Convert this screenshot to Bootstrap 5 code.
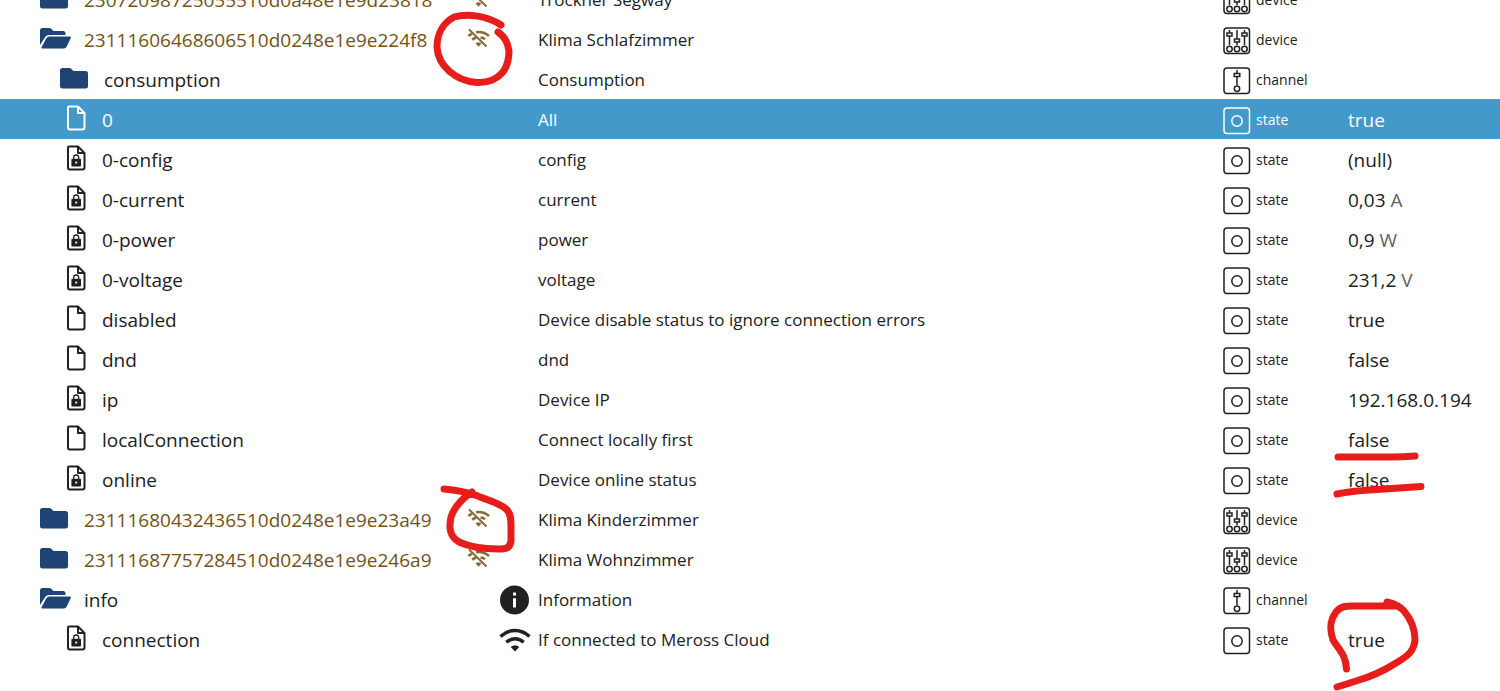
<!DOCTYPE html>
<html lang="en">
<head>
<meta charset="utf-8">
<meta name="viewport" content="width=device-width, initial-scale=1">
<title>Objects</title>
<link href="https://cdn.jsdelivr.net/npm/bootstrap@5.3.0/dist/css/bootstrap.min.css" rel="stylesheet">
<style>
  body { font-family: "Open Sans", "Noto Sans", sans-serif; color: #212121; background: #fff; }
  .viewport { overflow: hidden; min-height: 100vh; }
  /* the list is scrolled by half a row */
  .objects { table-layout: fixed; margin-top: -21px; }
  .objects td { padding: 0; }
  .line { height: 40px; white-space: nowrap; }
  .col-name { width: 498px; }
  .col-type { width: 125px; }
  .col-value { width: 152px; }
  .name, .value { font-size: 19px; padding-top: 2px; }
  .desc { font-size: 17px; padding-top: 2px; }
  .kind { font-size: 14px; }
  .level-1 { padding-left: 40px; }
  .level-2 { padding-left: 60px; }
  .slot-folder { width: 44px; padding-bottom: 4px; }
  .slot-file { width: 42px; padding-left: 6px; padding-bottom: 4px; }
  .slot-desc { width: 40px; padding-left: 1px; }
  .slot-kind { width: 33px; padding-top: 4px; }
  .folder { color: #1f4375; }
  .offline { color: #735216; }
  .unit { color: #616161; }
  .picked { background: #4399ca; color: #fff; }
  svg { display: block; flex: none; }
  .signal { margin: 0 7px 4px auto; opacity: .85; }
  .pen { fill: none; stroke: #e71d1c; stroke-width: 7; stroke-linecap: round; stroke-linejoin: round; pointer-events: none; }
</style>
</head>
<body>
<svg width="0" height="0" class="position-absolute" aria-hidden="true">
  <symbol id="i-folder" viewBox="0 0 32 22"><path fill="currentColor" d="M2.500 1H9.500Q10.500 1 11.200 1.700L13.500 4H25.500Q28 4 28 6.500V19Q28 21.500 25.500 21.500H2.500Q0 21.500 0 19V3.500Q0 1 2.500 1Z"/></symbol>
  <symbol id="i-open" viewBox="0 0 32 22"><path fill="currentColor" d="M2.500 1H9.500Q10.500 1 11.200 1.700L13.500 4H23Q25.500 4 25.500 6.500V8H9Q6.500 8 5 10.200L0 18V3.500Q0 1 2.500 1ZM9.300 9.500H29.800Q31.500 9.500 30.800 11L26.600 19.800Q25.800 21.500 24 21.500H2.500Q.8 21.500 1.600 20L6.500 11Q7.500 9.500 9.300 9.500Z"/></symbol>
  <symbol id="i-file" viewBox="0 0 20 26"><path fill="none" stroke="currentColor" stroke-width="2" stroke-linejoin="round" d="M3 1.500H12L18.500 8V22.500Q18.500 24.500 16.500 24.500H4Q2 24.500 2 22.500V2.500Q2 1.500 3 1.500ZM12 2V8H18.500"/></symbol>
  <symbol id="i-lock" viewBox="0 0 20 26"><path fill="none" stroke="currentColor" stroke-width="2" stroke-linejoin="round" d="M3 1.500H12L18.500 8V22.500Q18.500 24.500 16.500 24.500H4Q2 24.500 2 22.500V2.500Q2 1.500 3 1.500ZM12 2V8H18.500"/><path fill="none" stroke="currentColor" stroke-width="1.300" d="M7.700 14V12.500Q7.700 10 10.200 10T12.700 12.500V14"/><path fill="currentColor" fill-rule="evenodd" d="M6.200 13.700H14.200Q15 13.700 15 14.500V20.500Q15 21.500 14 21.500H6.400Q5.400 21.500 5.400 20.500V14.500Q5.400 13.700 6.200 13.700ZM10.200 16.500A1.100 1.100 0 1 0 10.200 18.700A1.100 1.100 0 1 0 10.200 16.500Z"/></symbol>
  <symbol id="i-off" viewBox="0 0 24 20"><g fill="none" stroke="currentColor"><path stroke-width="2" d="M2 1.500L19.500 18.500"/><path stroke-width="2.600" d="M1.500 8Q3 6.600 5 5.600M9 4.200Q16.500 3 22 8M5.200 11.700Q7 10 9.300 9.400M13.500 9.400L14 9.500Q16.500 10 18 11.300"/></g><path fill="currentColor" d="M8.500 15.500Q11.500 12.800 14.500 15.500L11.500 18.700Z"/></symbol>
  <symbol id="i-wifi" viewBox="0 0 32 24"><g fill="none" stroke="currentColor" stroke-width="3.500"><path d="M1.500 8.500Q8 2.500 16 2.500T30.500 8.500M7.300 14.300Q11.300 10.800 16 10.800T24.700 14.300"/></g><path fill="currentColor" d="M11.700 19Q16 15.400 20.300 19L16 23.500Z"/></symbol>
  <symbol id="i-info" viewBox="0 0 30 30"><path fill="currentColor" fill-rule="evenodd" d="M15.500 .5A14.500 14.500 0 1 1 15.500 29.500A14.500 14.500 0 1 1 15.500 .5ZM14 7.500V10.500H17V7.500ZM14 13.200V22.500H17V13.200Z"/></symbol>
  <symbol id="i-state" viewBox="0 0 28 28"><g fill="none" stroke="currentColor" stroke-width="1.500"><rect x="1" y="1" width="25.500" height="25.500" rx="3"/><circle cx="14" cy="14" r="5.200"/></g></symbol>
  <symbol id="i-channel" viewBox="0 0 28 28"><g fill="none" stroke="currentColor" stroke-width="1.500"><rect x="1" y="1" width="25.500" height="25.500" rx="3"/><path d="M14 3V6.500M11.200 6.500H16.800V9.500H11.200ZM14 9.500V18"/><circle cx="14" cy="21.800" r="2.700"/></g></symbol>
  <symbol id="i-device" viewBox="0 0 28 28"><g fill="none" stroke="currentColor" stroke-width="1.500"><rect x="1" y="1" width="25.500" height="25.500" rx="3"/><path d="M6.500 3V6M4 6H9V9H4ZM6.500 9V18M14 3V12M11.500 12H16.500V15H11.500ZM14 15V18M21.500 3V6M19 6H24V9H19ZM21.500 9V18"/><circle cx="6.500" cy="22" r="2.700"/><circle cx="14" cy="22" r="2.700"/><circle cx="21.500" cy="22" r="2.700"/></g></symbol>
</svg>

<main class="viewport position-relative">
<table class="objects w-100">
<colgroup><col class="col-name"><col><col class="col-type"><col class="col-value"></colgroup>
<tbody>
<tr>
  <td><div class="line name level-1 d-flex align-items-center offline"><span class="slot-folder folder"><svg width="32" height="22"><use href="#i-folder"/></svg></span>23072098725055510d0a48e1e9d23818<svg class="signal" width="24" height="20"><use href="#i-off"/></svg></div></td>
  <td><div class="line desc d-flex align-items-center"><span class="slot-desc"></span>Trockner Segway</div></td>
  <td><div class="line kind d-flex align-items-center"><span class="slot-kind"><svg width="28" height="28"><use href="#i-device"/></svg></span>device</div></td>
  <td></td>
</tr>
<tr>
  <td><div class="line name level-1 d-flex align-items-center offline"><span class="slot-folder folder"><svg width="32" height="22"><use href="#i-open"/></svg></span>23111606468606510d0248e1e9e224f8<svg class="signal" width="24" height="20"><use href="#i-off"/></svg></div></td>
  <td><div class="line desc d-flex align-items-center"><span class="slot-desc"></span>Klima Schlafzimmer</div></td>
  <td><div class="line kind d-flex align-items-center"><span class="slot-kind"><svg width="28" height="28"><use href="#i-device"/></svg></span>device</div></td>
  <td></td>
</tr>
<tr>
  <td><div class="line name level-2 d-flex align-items-center"><span class="slot-folder folder"><svg width="32" height="22"><use href="#i-folder"/></svg></span>consumption</div></td>
  <td><div class="line desc d-flex align-items-center"><span class="slot-desc"></span>Consumption</div></td>
  <td><div class="line kind d-flex align-items-center"><span class="slot-kind"><svg width="28" height="28"><use href="#i-channel"/></svg></span>channel</div></td>
  <td></td>
</tr>
<tr class="picked">
  <td><div class="line name level-2 d-flex align-items-center"><span class="slot-file"><svg width="20" height="26"><use href="#i-file"/></svg></span>0</div></td>
  <td><div class="line desc d-flex align-items-center"><span class="slot-desc"></span>All</div></td>
  <td><div class="line kind d-flex align-items-center"><span class="slot-kind"><svg width="28" height="28"><use href="#i-state"/></svg></span>state</div></td>
  <td><div class="line value d-flex align-items-center">true</div></td>
</tr>
<tr>
  <td><div class="line name level-2 d-flex align-items-center"><span class="slot-file"><svg width="20" height="26"><use href="#i-lock"/></svg></span>0-config</div></td>
  <td><div class="line desc d-flex align-items-center"><span class="slot-desc"></span>config</div></td>
  <td><div class="line kind d-flex align-items-center"><span class="slot-kind"><svg width="28" height="28"><use href="#i-state"/></svg></span>state</div></td>
  <td><div class="line value d-flex align-items-center">(null)</div></td>
</tr>
<tr>
  <td><div class="line name level-2 d-flex align-items-center"><span class="slot-file"><svg width="20" height="26"><use href="#i-lock"/></svg></span>0-current</div></td>
  <td><div class="line desc d-flex align-items-center"><span class="slot-desc"></span>current</div></td>
  <td><div class="line kind d-flex align-items-center"><span class="slot-kind"><svg width="28" height="28"><use href="#i-state"/></svg></span>state</div></td>
  <td><div class="line value d-flex align-items-center">0,03&nbsp;<span class="unit">A</span></div></td>
</tr>
<tr>
  <td><div class="line name level-2 d-flex align-items-center"><span class="slot-file"><svg width="20" height="26"><use href="#i-lock"/></svg></span>0-power</div></td>
  <td><div class="line desc d-flex align-items-center"><span class="slot-desc"></span>power</div></td>
  <td><div class="line kind d-flex align-items-center"><span class="slot-kind"><svg width="28" height="28"><use href="#i-state"/></svg></span>state</div></td>
  <td><div class="line value d-flex align-items-center">0,9&nbsp;<span class="unit">W</span></div></td>
</tr>
<tr>
  <td><div class="line name level-2 d-flex align-items-center"><span class="slot-file"><svg width="20" height="26"><use href="#i-lock"/></svg></span>0-voltage</div></td>
  <td><div class="line desc d-flex align-items-center"><span class="slot-desc"></span>voltage</div></td>
  <td><div class="line kind d-flex align-items-center"><span class="slot-kind"><svg width="28" height="28"><use href="#i-state"/></svg></span>state</div></td>
  <td><div class="line value d-flex align-items-center">231,2&nbsp;<span class="unit">V</span></div></td>
</tr>
<tr>
  <td><div class="line name level-2 d-flex align-items-center"><span class="slot-file"><svg width="20" height="26"><use href="#i-file"/></svg></span>disabled</div></td>
  <td><div class="line desc d-flex align-items-center"><span class="slot-desc"></span>Device disable status to ignore connection errors</div></td>
  <td><div class="line kind d-flex align-items-center"><span class="slot-kind"><svg width="28" height="28"><use href="#i-state"/></svg></span>state</div></td>
  <td><div class="line value d-flex align-items-center">true</div></td>
</tr>
<tr>
  <td><div class="line name level-2 d-flex align-items-center"><span class="slot-file"><svg width="20" height="26"><use href="#i-file"/></svg></span>dnd</div></td>
  <td><div class="line desc d-flex align-items-center"><span class="slot-desc"></span>dnd</div></td>
  <td><div class="line kind d-flex align-items-center"><span class="slot-kind"><svg width="28" height="28"><use href="#i-state"/></svg></span>state</div></td>
  <td><div class="line value d-flex align-items-center">false</div></td>
</tr>
<tr>
  <td><div class="line name level-2 d-flex align-items-center"><span class="slot-file"><svg width="20" height="26"><use href="#i-lock"/></svg></span>ip</div></td>
  <td><div class="line desc d-flex align-items-center"><span class="slot-desc"></span>Device IP</div></td>
  <td><div class="line kind d-flex align-items-center"><span class="slot-kind"><svg width="28" height="28"><use href="#i-state"/></svg></span>state</div></td>
  <td><div class="line value d-flex align-items-center">192.168.0.194</div></td>
</tr>
<tr>
  <td><div class="line name level-2 d-flex align-items-center"><span class="slot-file"><svg width="20" height="26"><use href="#i-file"/></svg></span>localConnection</div></td>
  <td><div class="line desc d-flex align-items-center"><span class="slot-desc"></span>Connect locally first</div></td>
  <td><div class="line kind d-flex align-items-center"><span class="slot-kind"><svg width="28" height="28"><use href="#i-state"/></svg></span>state</div></td>
  <td><div class="line value d-flex align-items-center">false</div></td>
</tr>
<tr>
  <td><div class="line name level-2 d-flex align-items-center"><span class="slot-file"><svg width="20" height="26"><use href="#i-lock"/></svg></span>online</div></td>
  <td><div class="line desc d-flex align-items-center"><span class="slot-desc"></span>Device online status</div></td>
  <td><div class="line kind d-flex align-items-center"><span class="slot-kind"><svg width="28" height="28"><use href="#i-state"/></svg></span>state</div></td>
  <td><div class="line value d-flex align-items-center">false</div></td>
</tr>
<tr>
  <td><div class="line name level-1 d-flex align-items-center offline"><span class="slot-folder folder"><svg width="32" height="22"><use href="#i-folder"/></svg></span>23111680432436510d0248e1e9e23a49<svg class="signal" width="24" height="20"><use href="#i-off"/></svg></div></td>
  <td><div class="line desc d-flex align-items-center"><span class="slot-desc"></span>Klima Kinderzimmer</div></td>
  <td><div class="line kind d-flex align-items-center"><span class="slot-kind"><svg width="28" height="28"><use href="#i-device"/></svg></span>device</div></td>
  <td></td>
</tr>
<tr>
  <td><div class="line name level-1 d-flex align-items-center offline"><span class="slot-folder folder"><svg width="32" height="22"><use href="#i-folder"/></svg></span>23111687757284510d0248e1e9e246a9<svg class="signal" width="24" height="20"><use href="#i-off"/></svg></div></td>
  <td><div class="line desc d-flex align-items-center"><span class="slot-desc"></span>Klima Wohnzimmer</div></td>
  <td><div class="line kind d-flex align-items-center"><span class="slot-kind"><svg width="28" height="28"><use href="#i-device"/></svg></span>device</div></td>
  <td></td>
</tr>
<tr>
  <td><div class="line name level-1 d-flex align-items-center"><span class="slot-folder folder"><svg width="32" height="22"><use href="#i-open"/></svg></span>info</div></td>
  <td><div class="line desc d-flex align-items-center"><span class="slot-desc"><svg width="30" height="30"><use href="#i-info"/></svg></span>Information</div></td>
  <td><div class="line kind d-flex align-items-center"><span class="slot-kind"><svg width="28" height="28"><use href="#i-channel"/></svg></span>channel</div></td>
  <td></td>
</tr>
<tr>
  <td><div class="line name level-2 d-flex align-items-center"><span class="slot-file"><svg width="20" height="26"><use href="#i-lock"/></svg></span>connection</div></td>
  <td><div class="line desc d-flex align-items-center"><span class="slot-desc"><svg width="32" height="24"><use href="#i-wifi"/></svg></span>If connected to Meross Cloud</div></td>
  <td><div class="line kind d-flex align-items-center"><span class="slot-kind"><svg width="28" height="28"><use href="#i-state"/></svg></span>state</div></td>
  <td><div class="line value d-flex align-items-center">true</div></td>
</tr>
</tbody>
</table>

<!-- pen marks around the offline icons -->
<svg class="pen position-absolute top-0 start-0" width="530" height="691" aria-hidden="true">
  <path d="M501 25C488 16 467 13 454 17C443 23 437 34 437 47C438 66 456 81 477 82.500C491 83 498 78 503 72C508 65 509 57 509 51C508 43 504 36 498 32"/>
  <path d="M444 489C454 490 466 492 475 495C487 500 500 503 506 509C511 513 511 520 511 526V541C510 549 505 549 498 549C485 549 470 547 459 542C449 536 449 527 451 517C455 505 463 498 472 492"/>
</svg>
<!-- pen marks on the values -->
<svg class="pen position-absolute top-0 end-0" width="180" height="691" aria-hidden="true">
  <path d="M18 457H70Q84 457 95 456M17 494Q32 491 50 490L101 486.500"/>
  <path d="M26.500 669C26 655 19 650 13 640C9 628 10 620 16 612C21 606 26 606 33 606H78M67 602Q79 605 84 611C90 618 95 628 95 640C94 651 88 656 76 663C62 672 50 677 36 681Q27 684 17 687"/>
</svg>
</main>
<script src="https://cdn.jsdelivr.net/npm/bootstrap@5.3.0/dist/js/bootstrap.bundle.min.js"></script>
</body>
</html>
